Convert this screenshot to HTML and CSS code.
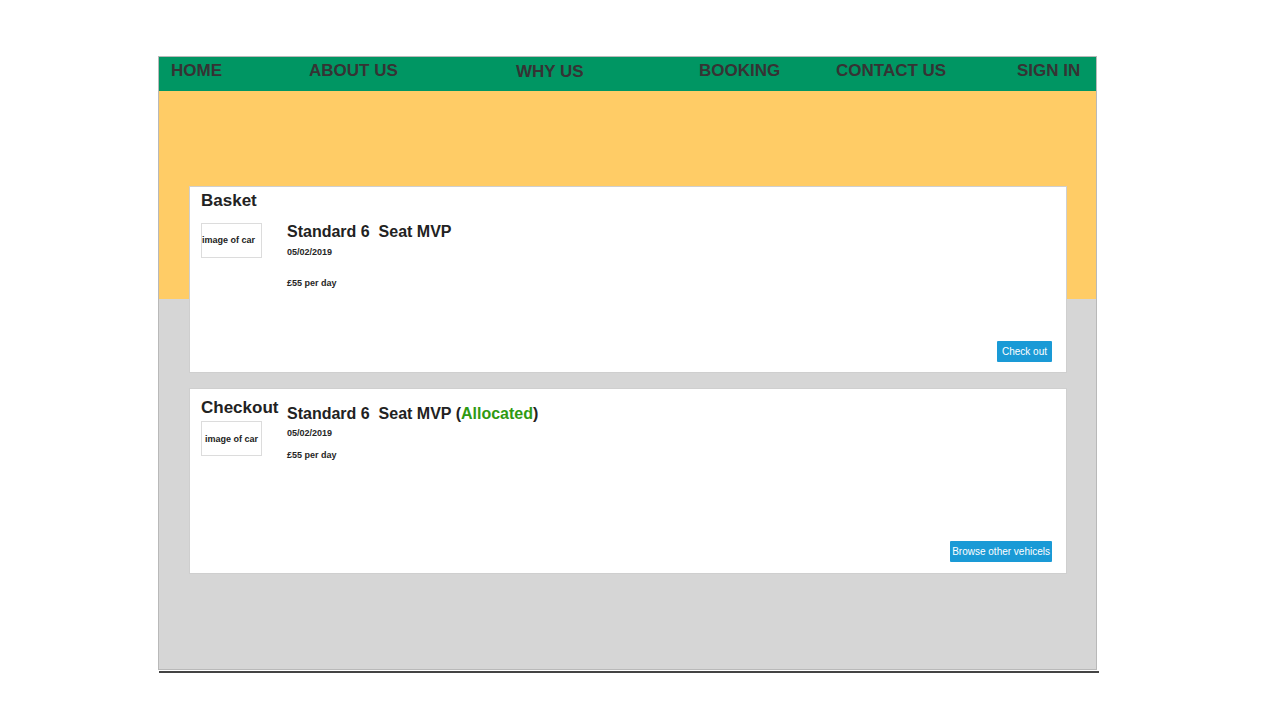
FILE: index.html
```html
<!DOCTYPE html>
<html lang="en">
<head>
<meta charset="utf-8">
<title>Basket</title>
<link rel="stylesheet" href="styles.css">
</head>
<body>
<div class="page">
  <nav class="nav">
    <a class="nav-link" href="#">HOME</a>
    <a class="nav-link" href="#">ABOUT US</a>
    <a class="nav-link nav-low" href="#">WHY US</a>
    <a class="nav-link" href="#">BOOKING</a>
    <a class="nav-link" href="#">CONTACT US</a>
    <a class="nav-link" href="#">SIGN IN</a>
  </nav>
  <main class="content">
    <section class="card card-basket">
      <h2 class="card-title">Basket</h2>
      <div class="item item-basket">
        <div class="thumb thumb-left">image of car</div>
        <div class="details">
          <h3 class="vehicle">Standard 6&nbsp; Seat MVP</h3>
          <p class="date date-basket">05/02/2019</p>
          <p class="price price-wide">£55 per day</p>
        </div>
      </div>
      <button class="btn btn-check">Check out</button>
    </section>
    <section class="card card-checkout">
      <div class="item">
        <div class="side">
          <h2 class="card-title card-title-checkout">Checkout</h2>
          <div class="thumb thumb-center">image of car</div>
        </div>
        <div class="details details-checkout">
          <h3 class="vehicle">Standard 6&nbsp; Seat MVP (<span class="allocated">Allocated</span>)</h3>
          <p class="date">05/02/2019</p>
          <p class="price">£55 per day</p>
        </div>
      </div>
      <button class="btn btn-browse">Browse other vehicels</button>
    </section>
  </main>
</div>
<div class="rule"></div>
</body>
</html>
```

FILE: styles.css
```css
html, body {
  margin: 0;
  padding: 0;
  background: #ffffff;
}

body {
  font-family: "Liberation Sans", Arial, sans-serif;
  color: #262626;
}

.page {
  margin: 56px 0 0 158px;
  width: 937px;
  border: 1px solid #b9b9b9;
}

.nav {
  display: grid;
  grid-template-columns: 138px 207px 183px 137px 181px auto;
  height: 34px;
  box-sizing: border-box;
  padding: 4px 0 0 12px;
  background: #009663;
}

.nav-link {
  font-size: 17px;
  line-height: 20px;
  font-weight: bold;
  color: #363334;
  text-decoration: none;
}

.nav-low {
  padding-top: 1px;
}

.content {
  display: flex;
  flex-direction: column;
  gap: 15px;
  padding: 95px 29px 95px 30px;
  background: linear-gradient(#ffcc66 0, #ffcc66 208px, #d6d6d6 208px, #d6d6d6 100%);
}

.card {
  display: flex;
  flex-direction: column;
  box-sizing: border-box;
  padding: 4px 14px 10px 11px;
  background: #ffffff;
  border: 1px solid #cfcfcf;
}

.card-basket {
  height: 187px;
}

.card-checkout {
  height: 186px;
  padding-bottom: 11px;
}

.card-title {
  margin: 0;
  font-size: 17px;
  line-height: 20px;
  font-weight: bold;
  color: #222222;
}

.card-title-checkout {
  margin-top: 5px;
}

.item {
  display: flex;
  align-items: flex-start;
}

.item-basket {
  margin-top: 12px;
}

.side {
  width: 86px;
  flex: none;
}

.thumb {
  width: 61px;
  height: 35px;
  box-sizing: border-box;
  border: 1px solid #dcdcdc;
  display: flex;
  align-items: center;
  font-size: 9px;
  font-weight: bold;
  color: #222222;
  white-space: nowrap;
}

.thumb-left {
  justify-content: flex-start;
  margin-right: 25px;
  padding-bottom: 2px;
  flex: none;
}

.thumb-center {
  justify-content: center;
  margin-top: 3px;
}

.details {
  display: flex;
  flex-direction: column;
}

.details-checkout {
  margin-top: 12px;
}

.vehicle {
  margin: 0;
  font-size: 16px;
  line-height: 18px;
  font-weight: bold;
  color: #222222;
}

.allocated {
  color: #2f9a12;
}

.date {
  margin: 5px 0 0;
  font-size: 9px;
  line-height: 11px;
  font-weight: bold;
}

.date-basket {
  margin-top: 6px;
}

.price {
  margin: 11px 0 0;
  font-size: 9px;
  line-height: 11px;
  font-weight: bold;
}

.price-wide {
  margin-top: 20px;
}

.btn {
  margin-top: auto;
  align-self: flex-end;
  height: 21px;
  border: 0;
  border-radius: 1px;
  background: #1a9ad6;
  color: #ffffff;
  font-family: "Liberation Sans", Arial, sans-serif;
  font-size: 10px;
  line-height: 21px;
  cursor: pointer;
}

.btn-check {
  padding: 0 5px;
}

.btn-browse {
  padding: 0 2px;
  white-space: nowrap;
}

.rule {
  margin: 1px 0 0 159px;
  width: 940px;
  height: 2px;
  background: #444444;
}
```
